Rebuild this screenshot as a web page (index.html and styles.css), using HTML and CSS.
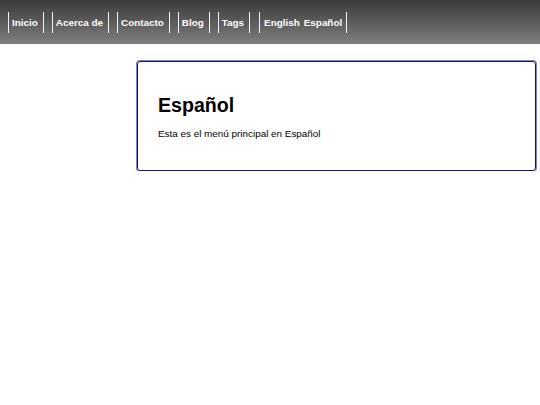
FILE: index.html
```html
<!DOCTYPE html>
<html lang="es">
<head>
<meta charset="utf-8">
<title>Español</title>
<link rel="stylesheet" href="styles.css">
</head>
<body>
<header class="topbar">
  <nav class="menu">
    <a class="menu-item" href="#">Inicio</a>
    <a class="menu-item" href="#">Acerca de</a>
    <a class="menu-item" href="#">Contacto</a>
    <a class="menu-item" href="#">Blog</a>
    <a class="menu-item" href="#">Tags</a>
    <span class="menu-item lang-group">
      <a class="lang" href="#">English</a>
      <a class="lang" href="#">Español</a>
    </span>
  </nav>
</header>
<div class="layout">
  <aside class="sidebar"></aside>
  <main class="content">
    <section class="card">
      <h1 class="card-title">Español</h1>
      <p class="card-text">Esta es el menú principal en Español</p>
    </section>
  </main>
</div>
</body>
</html>
```
FILE: styles.css
```css
html, body {
  margin: 0;
  padding: 0;
  background: #ffffff;
  font-family: "Liberation Sans", Arial, sans-serif;
}

.topbar {
  height: 44px;
  background: linear-gradient(to bottom, #3a3a3a 0%, #7e7e7e 100%);
  display: flex;
  align-items: center;
  padding-left: 8px;
}

.menu {
  display: flex;
  align-items: center;
  gap: 8px;
  margin-top: 1px;
}

.menu-item {
  display: flex;
  align-items: center;
  height: 21px;
  padding: 0 5px 0 3px;
  border-left: 1px solid #f2f2f2;
  border-right: 1px solid #f2f2f2;
  color: #ffffff;
  font-weight: bold;
  font-size: 9.9px;
  text-decoration: none;
}

.lang-group {
  margin-left: 1px;
  padding: 0 4px 0 4px;
  gap: 4px;
}

.lang {
  color: #ffffff;
  text-decoration: none;
}

.layout {
  display: grid;
  grid-template-columns: 136px 1fr;
  padding: 16px 4px 0 0;
}

.card {
  border: 1px solid #14146e;
  box-shadow: 0 0 0 1px rgba(90, 90, 170, 0.75);
  border-radius: 3px;
  margin: 1px 0 0 1px;
  padding: 0 20px;
  box-sizing: border-box;
  height: 110px;
}

.card-title {
  margin: 31px 0 0;
  font-size: 19.6px;
  font-weight: bold;
  color: #000000;
  line-height: 24px;
}

.card-text {
  margin: 11px 0 0;
  font-size: 9.9px;
  color: #000000;
  line-height: 12px;
}
```
